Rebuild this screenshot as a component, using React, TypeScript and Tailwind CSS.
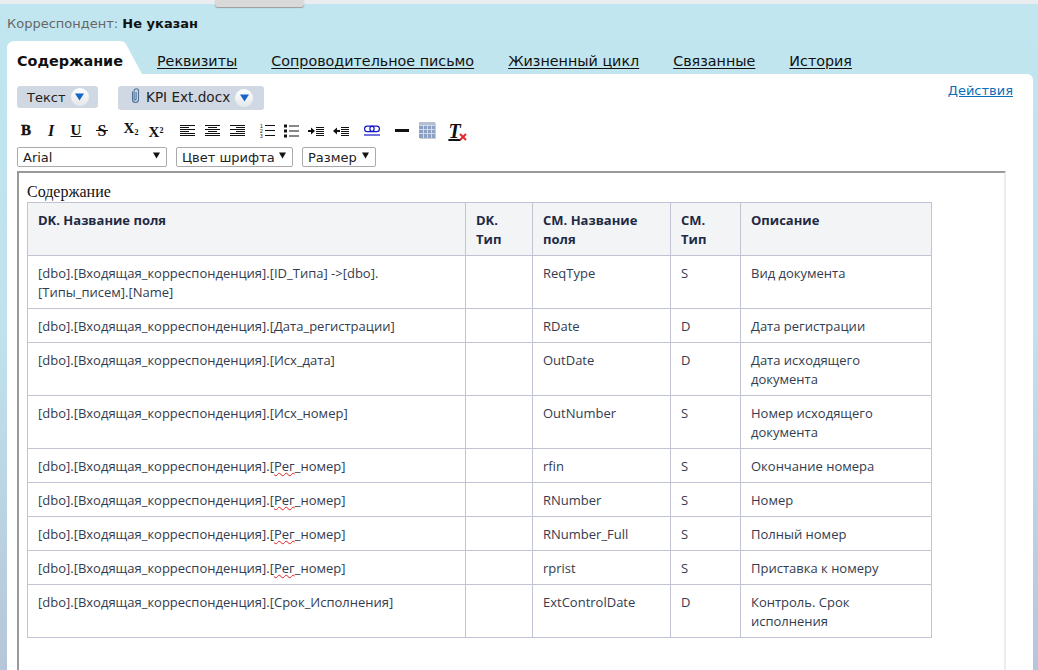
import React from "react";

const rows: [string[], string, string, string[]][] = [
  [["[dbo].[Входящая_корреспонденция].[ID_Типа] ->[dbo].", "[Типы_писем].[Name]"], "ReqType", "S", ["Вид документа"]],
  [["[dbo].[Входящая_корреспонденция].[Дата_регистрации]"], "RDate", "D", ["Дата регистрации"]],
  [["[dbo].[Входящая_корреспонденция].[Исх_дата]"], "OutDate", "D", ["Дата исходящего", "документа"]],
  [["[dbo].[Входящая_корреспонденция].[Исх_номер]"], "OutNumber", "S", ["Номер исходящего", "документа"]],
  [["REG"], "rfin", "S", ["Окончание номера"]],
  [["REG"], "RNumber", "S", ["Номер"]],
  [["REG"], "RNumber_Full", "S", ["Полный номер"]],
  [["REG"], "rprist", "S", ["Приставка к номеру"]],
  [["[dbo].[Входящая_корреспонденция].[Срок_Исполнения]"], "ExtControlDate", "D", ["Контроль. Срок", "исполнения"]],
];

const Lines = ({ l }: { l: string[] }) => (
  <>
    {l.map((t, i) => (
      <div key={i} className="whitespace-nowrap">{t}</div>
    ))}
  </>
);

const Caret = () => (
  <span className="flex h-[18px] w-[18px] items-center justify-center rounded-full bg-gradient-to-b from-white to-[#e4e7ea]">
    <svg width="9" height="8" viewBox="0 0 9 8">
      <path d="M0 0.5H9L4.5 7.5Z" fill="#1565c8" />
    </svg>
  </span>
);

const Btn = ({ children, className = "" }: { children: React.ReactNode; className?: string }) => (
  <span className={"flex h-[22px] w-6 shrink-0 items-center justify-center " + className}>{children}</span>
);

const Sel = ({ text, w }: { text: string; w: string }) => (
  <div className={"flex h-5 items-center justify-between rounded-[2px] border border-[#aaaaaa] bg-white pl-[5px] pr-[6px] text-[13px] leading-none text-[#222] " + w}>
    <span>{text}</span>
    <svg width="7" height="7" viewBox="0 0 7 7" className="mb-[3px]">
      <path d="M0 0.5H7L3.5 6.5Z" fill="#111" />
    </svg>
  </div>
);

const five = [0, 1, 2, 3, 4];

const IndentLines = () => (
  <>
    {five.map((i) => (
      <rect key={i} x="8" y={3 + i * 2} width="8" height="1" fill="#111" />
    ))}
  </>
);

const cell = "border border-[#c0c4d4] px-[10px] pb-[6px] pt-[8px]";

export default function App() {
  return (
    <div className="flex h-screen w-full flex-col overflow-hidden bg-gradient-to-b from-[#c1e6f0] via-[#bfe2ec] to-[#b6c6da] font-['DejaVu_Sans',sans-serif]">
      <div className="relative h-1 shrink-0 bg-[#e9edf0]">
        <div className="absolute left-[215px] top-0 h-[7px] w-[89px] rounded-b-[3px] bg-[#d9d9d9] shadow-[0_1px_1px_#999]" />
      </div>
      <div className="h-[37px] shrink-0 pl-[7px] pt-[12px] text-[13px] leading-4 text-[#666]">
        Корреспондент: <b className="text-[#111]">Не указан</b>
      </div>

      <div className="flex h-[33px] shrink-0 items-end pl-[7px] text-[14.3px]">
        <div className="relative h-[33px] w-[135px]">
          <svg className="absolute inset-0" width="135" height="33" viewBox="0 0 135 33">
            <path d="M0 33V8Q0 0 8 0H113Q118 0 120 5L135 33Z" fill="#fff" />
          </svg>
          <b className="absolute left-[10px] top-[10px] text-[14.4px] leading-5 text-[#111]">Содержание</b>
        </div>
        <div className="flex gap-[34px] pb-[3px] pl-[15px] leading-5 text-[#111] underline underline-offset-2">
          <span>Реквизиты</span>
          <span>Сопроводительное письмо</span>
          <span>Жизненный цикл</span>
          <span>Связанные</span>
          <span>История</span>
        </div>
      </div>

      <div className="ml-[7px] mr-[5px] flex min-h-0 flex-1 flex-col rounded-tr-[6px] bg-white pl-[10px]">
        <div className="flex h-[44px] shrink-0 items-start pt-3">
          <div className="flex h-[22px] w-[81px] items-center gap-[5px] rounded-[3px] bg-[#d0d9e3] pl-[10px] text-[13px] leading-none text-[#222]">
            Текст <Caret />
          </div>
          <div className="ml-5 flex h-6 w-[146px] items-center rounded-[3px] bg-[#d0d9e3] pl-[13px] text-[13.6px] leading-none text-[#222]">
            <svg width="9" height="16" viewBox="0 0 9 16" fill="none" stroke="#4f7199" strokeWidth="1.1" className="mb-[5px] mr-[6px]">
              <path d="M1.5 3.5V11.5a3 3 0 0 0 6 0V3a2.2 2.2 0 0 0-4.4 0V11a1 1 0 0 0 2 0V4" />
            </svg>
            <span>KPI Ext.docx</span>
            <span className="ml-[5px]">
              <Caret />
            </span>
          </div>
          <span className="ml-auto mr-5 mt-[-5px] text-[13px] leading-5 text-[#0b70b8] underline">Действия</span>
        </div>

        <div className="-ml-[3px] flex h-[26px] shrink-0 items-center pb-[1px] text-[#111]">
          <Btn><span className="font-['Liberation_Serif',serif] text-[15px] font-bold leading-none [-webkit-text-stroke:0.4px_#111]">B</span></Btn>
          <Btn className="ml-px"><span className="font-['Liberation_Serif',serif] text-[16px] font-bold italic leading-none">I</span></Btn>
          <Btn className="ml-px"><span className="font-['Liberation_Serif',serif] text-[15px] font-bold leading-none underline">U</span></Btn>
          <Btn className="ml-[2px]">
            <span className="relative font-['Liberation_Serif',serif] text-[16px] font-bold leading-none">
              S
              <span className="absolute -left-[2px] -right-[2px] top-[7px] h-px bg-[#111]" />
            </span>
          </Btn>
          <Btn className="ml-[5px]"><span className="mb-1 font-['Liberation_Serif',serif] text-[15px] font-bold leading-none">X<sub className="text-[8px]">2</sub></span></Btn>
          <Btn className="ml-px"><span className="mt-1 font-['Liberation_Serif',serif] text-[15px] font-bold leading-none">X<sup className="text-[8px]">2</sup></span></Btn>

          <Btn className="ml-[7px]">
            <svg width="15" height="14" viewBox="0 0 15 14"><rect y="1" width="15" height="1" fill="#111"/><rect y="3" width="9" height="1" fill="#111"/><rect y="5" width="15" height="1" fill="#111"/><rect y="7" width="9" height="1" fill="#111"/><rect y="9" width="15" height="1" fill="#111"/><rect y="11" width="15" height="1" fill="#111"/></svg>
          </Btn>
          <Btn className="ml-px">
            <svg width="15" height="14" viewBox="0 0 15 14"><rect y="1" width="15" height="1" fill="#111"/><rect x="3" y="3" width="9" height="1" fill="#111"/><rect y="5" width="15" height="1" fill="#111"/><rect x="3" y="7" width="9" height="1" fill="#111"/><rect y="9" width="15" height="1" fill="#111"/><rect y="11" width="15" height="1" fill="#111"/></svg>
          </Btn>
          <Btn className="ml-px">
            <svg width="15" height="14" viewBox="0 0 15 14"><rect y="1" width="15" height="1" fill="#111"/><rect x="6" y="3" width="9" height="1" fill="#111"/><rect y="5" width="15" height="1" fill="#111"/><rect x="6" y="7" width="9" height="1" fill="#111"/><rect y="9" width="15" height="1" fill="#111"/><rect y="11" width="15" height="1" fill="#111"/></svg>
          </Btn>

          <Btn className="ml-[6px]">
            <svg width="15" height="15" viewBox="0 0 15 15">
              <text x="0" y="5" fontSize="5" fontFamily="Liberation Sans" fill="#111">1</text>
              <text x="0" y="10" fontSize="5" fontFamily="Liberation Sans" fill="#111">2</text>
              <text x="0" y="15" fontSize="5" fontFamily="Liberation Sans" fill="#111">3</text>
              <rect x="5" y="2" width="10" height="1" fill="#111"/><rect x="5" y="7" width="10" height="1" fill="#111"/><rect x="5" y="12" width="10" height="1" fill="#111"/>
            </svg>
          </Btn>
          <Btn>
            <svg width="15" height="14" viewBox="0 0 15 14">
              <rect x="0" y="0.5" width="3" height="3" fill="#111"/><rect x="0" y="5.5" width="3" height="3" fill="#111"/><rect x="0" y="10.5" width="3" height="3" fill="#111"/>
              <rect x="5" y="1.5" width="10" height="1" fill="#111"/><rect x="5" y="6.5" width="10" height="1" fill="#111"/><rect x="5" y="11.5" width="10" height="1" fill="#111"/>
            </svg>
          </Btn>
          <Btn className="ml-px">
            <svg width="16" height="14" viewBox="0 0 16 14"><path d="M0 6H3V3.5L7 7L3 10.5V8H0Z" fill="#111"/><IndentLines /></svg>
          </Btn>
          <Btn className="ml-px">
            <svg width="16" height="14" viewBox="0 0 16 14"><path d="M7 6H4V3.5L0 7L4 10.5V8H7Z" fill="#111"/><IndentLines /></svg>
          </Btn>

          <Btn className="ml-[7px]">
            <svg width="16" height="12" viewBox="0 0 16 12" fill="none" stroke="#1414c8" strokeWidth="1.2">
              <rect x="0.6" y="1.1" width="9.5" height="5.5" rx="2.7"/><rect x="5.9" y="1.1" width="9.5" height="5.5" rx="2.7"/><path d="M0 10H16"/>
            </svg>
          </Btn>
          <Btn className="ml-[6px]">
            <span className="h-[3px] w-[14px] bg-[#111]" />
          </Btn>
          <Btn className="ml-px">
            <svg width="17" height="17" viewBox="0 0 17 17">
              <rect width="16" height="16" fill="#8aa0c4"/><rect width="16" height="3" fill="#b4bfd0"/>
              <path d="M0 3.5H16M0 7.5H16M0 11.5H16M4.5 3V16M8.5 3V16M12.5 3V16" stroke="#dfe5ee" strokeWidth="0.8"/>
              <path d="M16.5 1V16.5H1" stroke="#ccc" fill="none"/>
            </svg>
          </Btn>
          <Btn className="ml-[7px]">
            <span className="relative -ml-[7px] font-['Liberation_Serif',serif] text-[20px] font-bold italic leading-none underline">T
              <svg className="absolute -right-[6px] bottom-0" width="8" height="8" viewBox="0 0 8 8"><path d="M1 1L7 7M7 1L1 7" stroke="#e8262c" strokeWidth="2"/></svg>
            </span>
          </Btn>
        </div>

        <div className="flex h-[27px] shrink-0 items-start gap-[9px] pt-[3px]">
          <Sel text="Arial" w="w-[150px]" />
          <Sel text="Цвет шрифта" w="w-[117px]" />
          <Sel text="Размер" w="w-[74px]" />
        </div>

        <div className="mr-[27px] min-h-0 flex-1 border-l-2 border-r-2 border-t-2 border-l-[#999] border-r-[#ececec] border-t-[#999] bg-white pl-2 pt-[9px]">
          <div className="h-[20px] font-['Liberation_Serif',serif] text-[16px] leading-[20px] text-[#111]">Содержание</div>
          <table className="w-[904px] table-fixed border-collapse font-['Open_Sans',sans-serif] text-[13px] leading-[19px] text-[#333c4f]">
            <colgroup>
              <col className="w-[438px]" />
              <col className="w-[67px]" />
              <col className="w-[138px]" />
              <col className="w-[70px]" />
              <col className="w-[191px]" />
            </colgroup>
            <thead>
              <tr className="bg-[#f3f4f6] align-top font-bold text-[#1f2a44]">
                {[["DK. Название поля"], ["DK.", "Тип"], ["CM. Название", "поля"], ["CM.", "Тип"], ["Описание"]].map((h, i) => (
                  <td key={i} className={cell}>
                    <Lines l={h} />
                  </td>
                ))}
              </tr>
            </thead>
            <tbody>
              {rows.map((r, i) => (
                <tr key={i} className="align-top">
                  <td className={cell}>
                    {r[0][0] === "REG" ? (
                      <div>
                        [dbo].[Входящая_корреспонденция].[<span className="underline decoration-[#e02020] decoration-wavy decoration-1">Рег</span>_номер]
                      </div>
                    ) : (
                      <Lines l={r[0]} />
                    )}
                  </td>
                  <td className={cell} />
                  <td className={cell}>{r[1]}</td>
                  <td className={cell}>{r[2]}</td>
                  <td className={cell}>
                    <Lines l={r[3]} />
                  </td>
                </tr>
              ))}
            </tbody>
          </table>
        </div>
      </div>
    </div>
  );
}
